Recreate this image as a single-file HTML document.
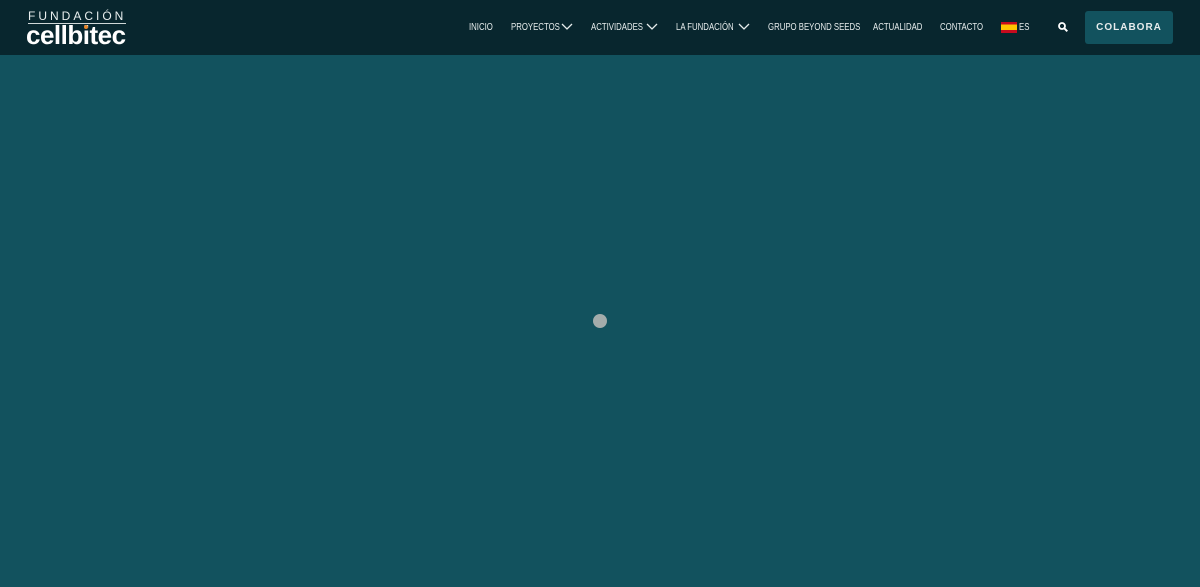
<!DOCTYPE html>
<html><head><meta charset="utf-8"><style>
body{margin:0;width:1200px;height:587px;background:#12525e;overflow:hidden;font-family:"Liberation Sans",sans-serif}
.hdr{position:absolute;left:0;top:0;width:1200px;height:55px;background:#08262e}
.n{position:absolute;top:22px;color:#e6ecec;font-size:10px;line-height:12px;white-space:nowrap;transform-origin:left center;transform:scaleX(.78)}
.ch{position:absolute;top:23px}
</style></head><body>
<div class="hdr">
<div style="position:absolute;left:28px;top:10px;color:#e8eeee;font-size:12px;letter-spacing:3px;line-height:13px">FUNDACIÓN</div>
<div style="position:absolute;left:28px;top:23px;width:98px;border-top:1px solid #cfd8d8"></div>
<div style="position:absolute;left:26px;top:22px;color:#fff;font-size:26px;font-weight:bold;line-height:26px;letter-spacing:-0.5px">cellbitec</div>
<div style="position:absolute;left:84px;top:25px;width:4px;height:4px;border-radius:50%;background:#e8872a"></div>
<div class="n" style="left:469px">INICIO</div>
<div class="n" style="left:511px">PROYECTOS</div>
<svg class="ch" style="left:561px" width="12" height="8"><path d="M1 1l5 5 5-5" fill="none" stroke="#e6ecec" stroke-width="1.3"/></svg>
<div class="n" style="left:591px">ACTIVIDADES</div>
<svg class="ch" style="left:646px" width="12" height="8"><path d="M1 1l5 5 5-5" fill="none" stroke="#e6ecec" stroke-width="1.3"/></svg>
<div class="n" style="left:676px">LA FUNDACIÓN</div>
<svg class="ch" style="left:738px" width="12" height="8"><path d="M1 1l5 5 5-5" fill="none" stroke="#e6ecec" stroke-width="1.3"/></svg>
<div class="n" style="left:768px">GRUPO BEYOND SEEDS</div>
<div class="n" style="left:873px">ACTUALIDAD</div>
<div class="n" style="left:940px">CONTACTO</div>
<div style="position:absolute;left:1001px;top:22px;width:16px;height:11px;background:linear-gradient(#c60b1e 0 25%,#ffc400 25% 75%,#c60b1e 75%)"></div>
<div class="n" style="left:1019px">ES</div>
<svg style="position:absolute;left:1058px;top:22px" width="10" height="10"><circle cx="4" cy="4" r="3" fill="none" stroke="#fff" stroke-width="1.8"/><path d="M6.3 6.3l3 3" stroke="#fff" stroke-width="2"/></svg>
<div style="position:absolute;left:1085px;top:11px;width:88px;height:33px;border-radius:3px;background:#12525e;color:#e6ecec;font-size:10px;font-weight:bold;letter-spacing:1px;text-align:center;line-height:33px">COLABORA</div>
</div>
<div style="position:absolute;left:593px;top:314px;width:14px;height:14px;border-radius:50%;background:#a3acab"></div>
</body></html>
